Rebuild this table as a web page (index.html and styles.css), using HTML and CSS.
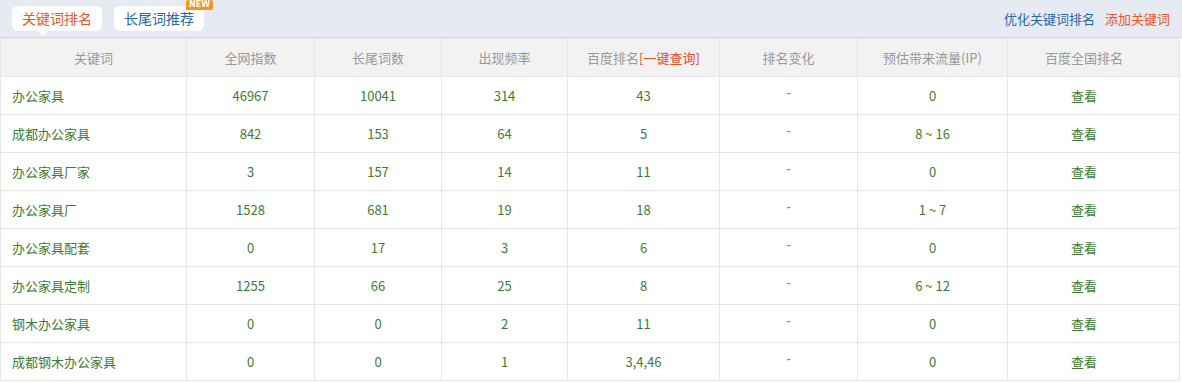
FILE: index.html
```html
<!DOCTYPE html>
<html lang="zh">
<head>
<meta charset="utf-8">
<link rel="stylesheet" href="styles.css">
</head>
<body>
<div class="page">
  <div class="topbar">
    <div class="tabs">
      <div class="tab tab-active">关键词排名</div>
      <div class="tab tab-blue">长尾词推荐<span class="badge">NEW</span></div>
    </div>
    <div class="links">
      <a class="link-blue">优化关键词排名</a>
      <a class="link-red">添加关键词</a>
    </div>
  </div>
  <table class="grid">
    <colgroup>
      <col class="c1"><col class="c2"><col class="c3"><col class="c4"><col class="c5"><col class="c6"><col class="c7"><col class="c8">
    </colgroup>
    <thead>
      <tr>
        <th>关键词</th><th>全网指数</th><th>长尾词数</th><th>出现频率</th>
        <th>百度排名<span class="red">[一键查询]</span></th><th>排名变化</th><th>预估带来流量(IP)</th><th class="last">百度全国排名</th>
      </tr>
    </thead>
    <tbody>
      <tr><td class="kw">办公家具</td><td>46967</td><td>10041</td><td>314</td><td>43</td><td class="dash">-</td><td>0</td><td class="last">查看</td></tr>
      <tr><td class="kw">成都办公家具</td><td>842</td><td>153</td><td>64</td><td>5</td><td class="dash">-</td><td>8 ~ 16</td><td class="last">查看</td></tr>
      <tr><td class="kw">办公家具厂家</td><td>3</td><td>157</td><td>14</td><td>11</td><td class="dash">-</td><td>0</td><td class="last">查看</td></tr>
      <tr><td class="kw">办公家具厂</td><td>1528</td><td>681</td><td>19</td><td>18</td><td class="dash">-</td><td>1 ~ 7</td><td class="last">查看</td></tr>
      <tr><td class="kw">办公家具配套</td><td>0</td><td>17</td><td>3</td><td>6</td><td class="dash">-</td><td>0</td><td class="last">查看</td></tr>
      <tr><td class="kw">办公家具定制</td><td>1255</td><td>66</td><td>25</td><td>8</td><td class="dash">-</td><td>6 ~ 12</td><td class="last">查看</td></tr>
      <tr><td class="kw">钢木办公家具</td><td>0</td><td>0</td><td>2</td><td>11</td><td class="dash">-</td><td>0</td><td class="last">查看</td></tr>
      <tr><td class="kw">成都钢木办公家具</td><td>0</td><td>0</td><td>1</td><td>3,4,46</td><td class="dash">-</td><td>0</td><td class="last">查看</td></tr>
    </tbody>
  </table>
</div>
</body>
</html>
```

FILE: styles.css
```css
html, body {
  margin: 0;
  padding: 0;
  background: #ffffff;
}
body {
  font-family: "Noto Sans CJK SC", "Microsoft YaHei", sans-serif;
  font-size: 13px;
  color: #333;
}
.page {
  width: 1182px;
}
.topbar {
  height: 38px;
  background: #e6eaf2;
  display: flex;
  align-items: flex-start;
  justify-content: space-between;
  box-sizing: border-box;
  border-bottom: 1px solid #d6dbe6;
}
.tabs {
  display: flex;
  gap: 12px;
  padding: 6px 0 0 12px;
}
.tab {
  position: relative;
  width: 90px;
  height: 25px;
  line-height: 25px;
  text-align: center;
  background: #fff;
  border-radius: 6px;
  font-size: 14px;
}
.tab-active {
  color: #f05523;
}
.tab-active::after {
  content: "";
  position: absolute;
  left: 26px;
  bottom: -5px;
  border-left: 5px solid transparent;
  border-right: 5px solid transparent;
  border-top: 5px solid #fff;
}
.tab-blue {
  color: #2a67ad;
}
.badge {
  position: absolute;
  right: -9px;
  top: -6px;
  background: #f7931e;
  color: #fff;
  font-family: "DejaVu Sans", sans-serif;
  font-size: 8px;
  font-weight: bold;
  line-height: 10px;
  padding: 0 3px;
  border-radius: 2px 2px 2px 0;
}
.links {
  display: flex;
  gap: 10px;
  padding: 9px 12px 0 0;
  font-size: 13px;
}
.link-blue { color: #2a67ad; }
.link-red { color: #f05523; }

.grid {
  border-collapse: collapse;
  table-layout: fixed;
  width: 1179px;
  margin-left: 0;
}
.c1 { width: 186px; }
.c2 { width: 128px; }
.c3 { width: 127px; }
.c4 { width: 126px; }
.c5 { width: 152px; }
.c6 { width: 138px; }
.c7 { width: 150px; }
.c8 { width: 172px; }
.grid th, .grid td {
  height: 37px;
  border: 1px solid #e6e6e6;
  text-align: center;
  padding: 0;
  font-weight: normal;
  white-space: nowrap;
}
.grid th {
  background: #f2f2f2;
  color: #999;
  font-size: 13px;
}
.grid td {
  color: #3d7d32;
  font-size: 13px;
}
.grid td.kw {
  text-align: left;
  padding-left: 11px;
}
.grid td.dash {
  color: #888;
  font-family: "Liberation Sans", sans-serif;
  font-size: 14px;
  padding-bottom: 6px;
  height: 31px;
}
.grid .last {
  padding-right: 19px;
}
.red { color: #ee4b22; }
```
